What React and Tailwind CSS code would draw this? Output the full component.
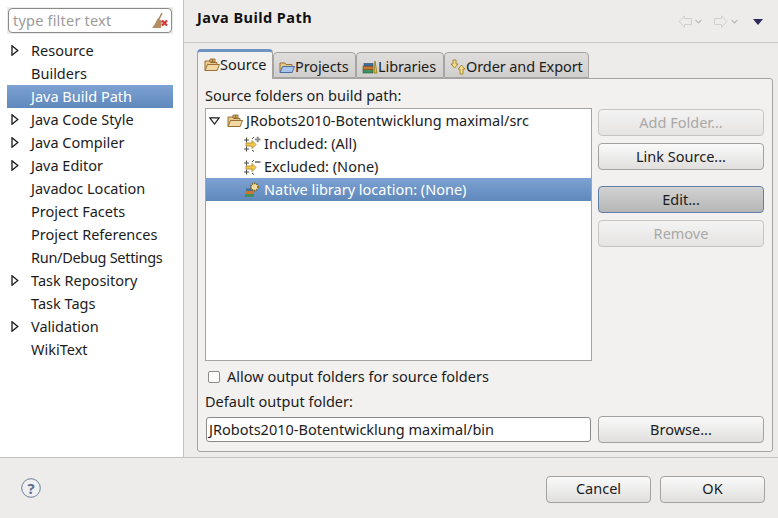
const font = { fontFamily: '"Noto Sans", "DejaVu Sans", sans-serif' };

const pages = [
  { name: "Resource", arrow: true },
  { name: "Builders" },
  { name: "Java Build Path", selected: true },
  { name: "Java Code Style", arrow: true },
  { name: "Java Compiler", arrow: true },
  { name: "Java Editor", arrow: true },
  { name: "Javadoc Location" },
  { name: "Project Facets" },
  { name: "Project References" },
  { name: "Run/Debug Settings", tight: true },
  { name: "Task Repository", arrow: true },
  { name: "Task Tags" },
  { name: "Validation", arrow: true },
  { name: "WikiText" },
];

function Arrow() {
  return (
    <svg width="8" height="11" viewBox="0 0 8 11" className="shrink-0">
      <path d="M1 .8 L6.8 5.5 L1 10.2 Z" fill="#fff" stroke="#1a1a1a" strokeWidth="1.3" />
    </svg>
  );
}

function Broom() {
  return (
    <svg width="16" height="16" viewBox="0 0 16 16">
      <path d="M10 0 L7 6" stroke="#a8835a" strokeWidth="1.5" />
      <path d="M6 5 L10 8 L9 15 L0 15 C3 12 4 8 6 5 Z" fill="#b58f62" />
      <path d="M10 7.5 L15 12.5 M15 7.5 L10 12.5" stroke="#d9343a" strokeWidth="2.2" />
    </svg>
  );
}

function FolderIcon({ open }) {
  return (
    <svg width="16" height="14" viewBox="0 0 16 14" className="shrink-0">
      <path d="M1 3 H6 L7 4.5 H13 V12.5 H1 Z" fill="#e8c98c" stroke="#9a7034" />
      <path d="M1 12.5 L3.5 6.5 H15.5 L13 12.5 Z" fill={open ? "#a9c4ea" : "#f2d9a4"} stroke={open ? "#4a6fa8" : "#9a7034"} />
      {!open && <path d="M6 1 H11 V4 H6 Z M8.5 1 V4" fill="#d9b069" stroke="#8a5f28" strokeWidth=".8" />}
    </svg>
  );
}

function BooksIcon() {
  return (
    <svg width="16" height="14" viewBox="0 0 16 14" className="shrink-0">
      <rect x="1" y="9.5" width="10" height="3.5" fill="#3f8f5f" stroke="#2d5f44" strokeWidth=".6" />
      <rect x="1" y="6" width="10" height="3.5" fill="#c9772f" stroke="#84491c" strokeWidth=".6" />
      <rect x="2" y="3.5" width="9" height="2.5" fill="#3f6f9f" stroke="#2d4a6a" strokeWidth=".6" />
      <path d="M12 13 L13 1 L15 13 Z" fill="#e8c040" stroke="#8a6d14" strokeWidth=".7" />
    </svg>
  );
}

function OrderIcon() {
  return (
    <svg width="16" height="16" viewBox="0 0 16 16" className="shrink-0">
      <path d="M3 1 H6 V5 H8 L4.5 9 L1 5 H3 Z" fill="#f3dc8c" stroke="#a88a35" />
      <path d="M10 15 H13 V10 H15 L11.5 6 L8 10 H10 Z" fill="#f3dc8c" stroke="#a88a35" />
    </svg>
  );
}

function FilterIcon({ mark }) {
  return (
    <svg width="17" height="16" viewBox="0 0 17 16" className="shrink-0">
      <path d="M0 4 H5 M2.5 1.5 V6.5 M0 13 H5 M2.5 10.5 V15.5" stroke="#4a4a4a" strokeWidth="1" />
      <path d="M2 7 H8 V4.5 L12 8.5 L8 12.5 V10 H2 Z" fill="#f2c84e" stroke="#a9842c" strokeWidth=".8" />
      <path d="M8 3 L10 1 M8 14 L10 15.5" stroke="#4a4a4a" strokeWidth="1" />
      {mark === "plus" ? (
        <path d="M11 3.5 H16.5 M13.75 .8 V6.2" stroke="#8c8c8c" strokeWidth="2" />
      ) : (
        <path d="M11 3 H16.5" stroke="#8c8c8c" strokeWidth="2" />
      )}
    </svg>
  );
}

function NativeIcon() {
  return (
    <svg width="17" height="16" viewBox="0 0 17 16" className="shrink-0">
      <rect x="1" y="12" width="9" height="3" fill="#3f8f5f" />
      <rect x="1" y="9" width="9" height="3" fill="#c9772f" />
      <rect x="2" y="6.5" width="8" height="2.5" fill="#3f6f9f" />
      <circle cx="10.5" cy="5" r="3.6" fill="#f0dca0" stroke="#7d6320" strokeWidth="1.6" strokeDasharray="1.4 .9" />
    </svg>
  );
}

function NavArrow({ flip }) {
  return (
    <div className="flex items-center gap-[3px]">
      <svg width="14" height="13" viewBox="0 0 14 13" className={flip ? "" : "-scale-x-100"}>
        <path d="M.5 3.5 H7.5 V.8 L13 6.5 L7.5 12.2 V9.5 H.5 Z" fill="none" stroke="#d0cfcd" />
      </svg>
      <svg width="7" height="5" viewBox="0 0 7 5">
        <path d="M.5 .8 L3.5 3.8 L6.5 .8" fill="none" stroke="#b8b7b5" strokeWidth="1.2" />
      </svg>
    </div>
  );
}

function Tab({ icon, label, active, width }) {
  return active ? (
    <div className={`${width} h-[30px] flex items-center pl-[6px] pb-[2px] gap-0 bg-[#f2f1f0] border border-b-0 border-[#a5a4a2] border-t-[3px] border-t-[#6f94c4] rounded-t-[4px] relative z-10 -mb-px text-[14.5px] text-[#1c1c1c]`}>
      {icon}
      <span>{label}</span>
    </div>
  ) : (
    <div className={`${width} h-[26px] flex items-center pl-[5px] pt-[3px] gap-0 border border-[#a5a4a2] rounded-t-[4px] bg-gradient-to-b from-[#dfdedc] to-[#d0cfcd] text-[14.5px] text-[#1c1c1c] tracking-[-0.1px] whitespace-nowrap`}>
      {icon}
      <span>{label}</span>
    </div>
  );
}

function PushButton({ label, disabled, focused, className = "" }) {
  let look = "border-[#a3a2a0] bg-gradient-to-b from-[#fafafa] to-[#e0dfde] text-[#1c1c1c]";
  if (disabled) look = "border-[#c6c5c3] bg-gradient-to-b from-[#f4f3f3] to-[#e5e4e3] text-[#a9a8a6]";
  if (focused) look = "border-[#5f7fa8] bg-gradient-to-b from-[#d2d2d2] to-[#b6b6b6] text-[#1c1c1c]";
  return (
    <div className={`h-[27px] flex items-center justify-center rounded-[4px] border text-[14.5px] ${look} ${className}`}>
      {label}
    </div>
  );
}

function TreeRow({ icon, label, selected }) {
  return (
    <div className={`h-[23px] flex items-center pl-[38px] gap-[3px] text-[14.5px] ${selected ? "bg-gradient-to-b from-[#7da2d3] to-[#5f88bb] text-white" : "text-[#1c1c1c]"}`}>
      {icon}
      <span>{label}</span>
    </div>
  );
}

export default function App() {
  return (
    <div style={font} className="w-[778px] h-[518px] overflow-hidden flex flex-col bg-[#edecea]">
      <div className="h-[458px] flex border-b border-[#c3c2c0]">
        <aside className="w-[184px] bg-white border-r border-[#c3c2c0] pt-[7px] pl-[7px] pr-[10px]">
          <div className="h-[27px] bg-[#edecea] p-px">
            <div className="h-[25px] flex items-center justify-between pl-[4px] pr-[3px] bg-white border border-[#8b8a88] rounded-[4px]">
              <span className="text-[14.5px] text-[#9c9b99] tracking-[0.2px]">type filter text</span>
              <Broom />
            </div>
          </div>
          <div className="mt-[5px]">
            {pages.map((page) => (
              <div
                key={page.name}
                className={`h-[23px] flex items-center text-[14.5px] ${page.tight ? "tracking-[-0.3px]" : ""} ${page.selected ? "bg-gradient-to-b from-[#7da2d3] to-[#5f88bb] text-white" : "text-[#1c1c1c]"}`}
              >
                <span className="w-[24px] pl-[4px]">{page.arrow && <Arrow />}</span>
                <span>{page.name}</span>
              </div>
            ))}
          </div>
        </aside>

        <main className="flex-1 flex flex-col">
          <header className="h-[43px] shrink-0 flex items-start justify-between border-b border-[#c8c7c5] pl-[13px] pr-[15px] pt-[7px]">
            <h1 className="text-[14.5px] font-bold text-[#111] tracking-[0.45px]">Java Build Path</h1>
            <div className="flex items-center gap-[12px] pt-[8px]">
              <NavArrow />
              <NavArrow flip />
              <svg width="10" height="6" viewBox="0 0 10 6" className="ml-[3px]">
                <path d="M0 0 H10 L5 6 Z" fill="#2e2a5c" />
              </svg>
            </div>
          </header>

          <div className="pl-[13px] pr-[5px] pt-[5px] flex-1 flex flex-col">
            <div className="flex items-end h-[30px] relative">
              <Tab active width="w-[76px]" icon={<FolderIcon />} label="Source" />
              <Tab width="w-[83px]" icon={<FolderIcon open />} label="Projects" />
              <Tab width="w-[88px]" icon={<BooksIcon />} label="Libraries" />
              <Tab width="w-[145px]" icon={<OrderIcon />} label="Order and Export" />
            </div>

            <section className="h-[374px] bg-[#f2f1f0] border border-[#a5a4a2] rounded-b-[3px] rounded-tr-[3px] pl-[7px] pr-[7px] flex gap-[6px]">
              <div className="w-[387px] flex flex-col">
                <div className="h-[29px] flex items-center text-[14.5px] text-[#1c1c1c] pt-[4px]">Source folders on build path:</div>
                <div className="h-[253px] bg-white border border-[#a5a4a2]">
                  <div className="h-[23px] flex items-center pl-[3px] text-[14.5px] text-[#1c1c1c] whitespace-nowrap">
                    <svg width="11" height="8" viewBox="0 0 11 8" className="shrink-0 mr-[7px]">
                      <path d="M.8 .8 H10.2 L5.5 7 Z" fill="#fff" stroke="#1a1a1a" strokeWidth="1.2" />
                    </svg>
                    <FolderIcon />
                    <span className="ml-[3px]">JRobots2010-Botentwicklung maximal/src</span>
                  </div>
                  <TreeRow icon={<FilterIcon mark="plus" />} label="Included: (All)" />
                  <TreeRow icon={<FilterIcon mark="minus" />} label="Excluded: (None)" />
                  <TreeRow selected icon={<NativeIcon />} label="Native library location: (None)" />
                </div>
                <label className="h-[31px] flex items-center pl-[3px] gap-[7px] text-[14.5px] text-[#1c1c1c] pt-[1px]">
                  <span className="w-[12px] h-[12px] bg-white border border-[#8b8a88] rounded-[2px]" />
                  Allow output folders for source folders
                </label>
                <div className="h-[20px] flex items-center text-[14.5px] text-[#1c1c1c]">Default output folder:</div>
                <div className="h-[25px] ml-px mr-px mt-[5px] flex items-center pl-[2px] bg-white border border-[#8b8a88] rounded-[3px] text-[14.5px] text-[#1c1c1c]">
                  JRobots2010-Botentwicklung maximal/bin
                </div>
              </div>

              <div className="w-[166px] flex flex-col pt-[30px]">
                <PushButton disabled label="Add Folder..." />
                <PushButton label="Link Source..." className="mt-[7px]" />
                <PushButton focused label="Edit..." className="mt-[16px]" />
                <PushButton disabled label="Remove" className="mt-[7px]" />
                <PushButton label="Browse..." className="mt-[169px]" />
              </div>
            </section>
          </div>
        </main>
      </div>

      <footer className="flex-1 flex items-center justify-between pl-[21px] pr-[13px] pt-[2px]">
        <svg width="20" height="20" viewBox="0 0 20 20" className="mb-[3px]">
          <circle cx="10" cy="10" r="9.3" fill="#f0f0f0" stroke="#6a7fa0" />
          <text x="10" y="15.5" textAnchor="middle" fontSize="15" fontWeight="700" fill="#5a6f92">?</text>
        </svg>
        <div className="flex gap-[9px]">
          <PushButton label="Cancel" className="w-[105px]" />
          <PushButton label="OK" className="w-[105px]" />
        </div>
      </footer>
    </div>
  );
}
